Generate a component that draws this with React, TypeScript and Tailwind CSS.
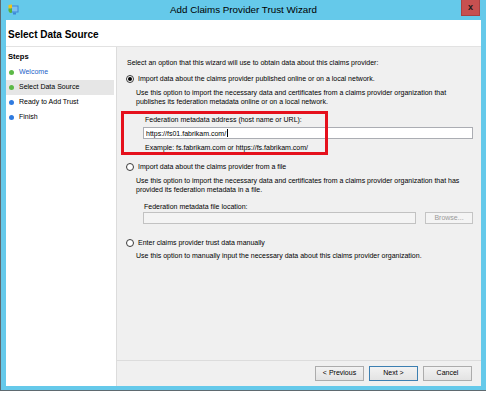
import React from 'react';

const Radio = ({ checked = false }: { checked?: boolean }) => (
  <span className="flex h-[8px] w-[8px] shrink-0 items-center justify-center rounded-full border border-[#3a3a3a] bg-white">
    {checked && <span className="h-[4px] w-[4px] rounded-full bg-black" />}
  </span>
);

const Line = ({ children, className = '' }: { children: React.ReactNode; className?: string }) => (
  <div className={`h-[9px] whitespace-nowrap leading-[9px] ${className}`}>{children}</div>
);

const steps = [
  { label: 'Welcome', dot: 'bg-[#5cb947]', text: 'text-[#2462c9]', active: false },
  { label: 'Select Data Source', dot: 'bg-[#5cb947]', text: 'text-black', active: true },
  { label: 'Ready to Add Trust', dot: 'bg-[#2f7be0]', text: 'text-black', active: false },
  { label: 'Finish', dot: 'bg-[#2f7be0]', text: 'text-black', active: false },
];

const WizardButton = ({ label, primary = false }: { label: string; primary?: boolean }) => (
  <div
    className={`flex h-[15px] w-[49px] items-center justify-center border bg-gradient-to-b from-[#f2f2f2] to-[#e3e3e3] text-[7px] ${
      primary ? 'border-[#3c7fb1]' : 'border-[#acacac]'
    }`}
  >
    {label}
  </div>
);

export default function App() {
  return (
    <div className="h-[394px] w-[486px] overflow-hidden bg-white font-['Liberation_Sans',Arial,sans-serif] text-black">
      <div className="flex h-[391px] flex-col border-b border-l border-[#5f6a70] bg-[#65c9ea] pb-[4px] pl-[5px] pr-[5px]">
        {/* title bar */}
        <div className="grid h-[20px] shrink-0 grid-cols-[1fr_auto_1fr]">
          <div className="pl-[2px] pt-[4px]">
            <svg width="11" height="11" viewBox="0 0 11 11">
              <rect x="3" y="1.5" width="7.5" height="7" fill="#3b86d6" />
              <rect x="4" y="2.5" width="5.5" height="5" fill="#7cc0f0" />
              <rect x="5" y="8.5" width="3" height="2" fill="#3b86d6" />
              <path d="M0.5 1 L4 0.5 L4 4.5 L0.5 4.5 Z" fill="#f2c318" />
              <path d="M0.5 4.5 L4 4.5 L4 8.5 L2 9 L0.5 7 Z" fill="#55b33a" />
            </svg>
          </div>
          <div className="pt-[4px] text-center text-[9.8px] leading-[12px] text-black">Add Claims Provider Trust Wizard</div>
          <div className="flex justify-end pr-[1px]">
            <div className="flex h-[16px] w-[19px] items-center justify-center border border-t-0 border-[#a94141] bg-[#c75050] text-[9px] font-bold leading-none text-[#1a1a1a]">
              x
            </div>
          </div>
        </div>

        {/* client area */}
        <div className="flex flex-1 flex-col bg-white">
          <div className="flex h-[27px] shrink-0 items-center border-b border-[#e2e2e2] pl-[2px] pt-[2px] text-[10px] font-bold">
            Select Data Source
          </div>

          <div className="flex flex-1">
            {/* steps */}
            <div className="w-[111px] shrink-0 border-r border-[#dcdcdc] bg-white pt-[4px]">
              <div className="h-[12px] pl-[2px] text-[7.6px] font-bold leading-[12px]">Steps</div>
              <div className="mt-[2px] flex flex-col">
                {steps.map((s) => (
                  <div
                    key={s.label}
                    className={`mr-[2px] flex h-[15px] items-center gap-[5px] pl-[3px] text-[7px] ${s.active ? 'bg-[#e6e6e6]' : ''}`}
                  >
                    <span className={`h-[5px] w-[5px] rounded-full ${s.dot}`} />
                    <span className={s.text}>{s.label}</span>
                  </div>
                ))}
              </div>
            </div>

            {/* options */}
            <div className="flex flex-1 flex-col bg-[#f0f0f0]">
              <div className="relative flex-1 pl-[9px] pt-[11px] text-[7px] text-black">
                <Line className="pl-[1px]">Select an option that this wizard will use to obtain data about this claims provider:</Line>

                <div className="mt-[7px] flex h-[9px] items-center gap-[4px]">
                  <Radio checked />
                  <span className="leading-[9px]">Import data about the claims provider published online or on a local network.</span>
                </div>
                <div className="mt-[5px] pl-[10px]">
                  <Line>Use this option to import the necessary data and certificates from a claims provider organization that</Line>
                  <Line>publishes its federation metadata online or on a local network.</Line>
                </div>
                <Line className="mt-[9px] pl-[19px]">Federation metadata address (host name or URL):</Line>
                <div className="ml-[17px] mt-[3px] flex h-[12px] w-[330px] items-center border border-[#abadb3] bg-white pl-[2px] leading-none">
                  https://fs01.fabrikam.com/
                  <span className="ml-[1px] h-[8px] w-px bg-black" />
                </div>
                <Line className="mt-[4px] pl-[19px]">Example: fs.fabrikam.com or https://fs.fabrikam.com/</Line>

                <div className="mt-[10px] flex h-[9px] items-center gap-[4px]">
                  <Radio />
                  <span className="leading-[9px]">Import data about the claims provider from a file</span>
                </div>
                <div className="mt-[5px] pl-[10px]">
                  <Line>Use this option to import the necessary data and certificates from a claims provider organization that has</Line>
                  <Line>provided its federation metadata in a file.</Line>
                </div>
                <Line className="mt-[8px] pl-[18px]">Federation metadata file location:</Line>
                <div className="ml-[17px] mt-[1px] flex gap-[9px]">
                  <div className="h-[12px] w-[273px] border border-[#c2c2c2] bg-[#f4f4f4]" />
                  <div className="flex h-[12px] w-[48px] items-center justify-center border border-[#c4c4c4] bg-[#f4f4f4] text-[#9a9a9a]">
                    Browse...
                  </div>
                </div>

                <div className="mt-[14px] flex h-[9px] items-center gap-[4px]">
                  <Radio />
                  <span className="leading-[9px]">Enter claims provider trust data manually</span>
                </div>
                <Line className="mt-[4px] pl-[10px]">Use this option to manually input the necessary data about this claims provider organization.</Line>

                {/* annotation highlight */}
                <div className="absolute left-[4px] top-[64px] h-[44px] w-[207px] border-[3px] border-[#e5101c]" />
              </div>

              <div className="flex h-[26px] shrink-0 justify-end gap-[5px] border-t border-[#dcdcdc] pr-[9px] pt-[5px]">
                <WizardButton label="< Previous" />
                <WizardButton label="Next >" primary />
                <WizardButton label="Cancel" />
              </div>
            </div>
          </div>
        </div>
      </div>
    </div>
  );
}
